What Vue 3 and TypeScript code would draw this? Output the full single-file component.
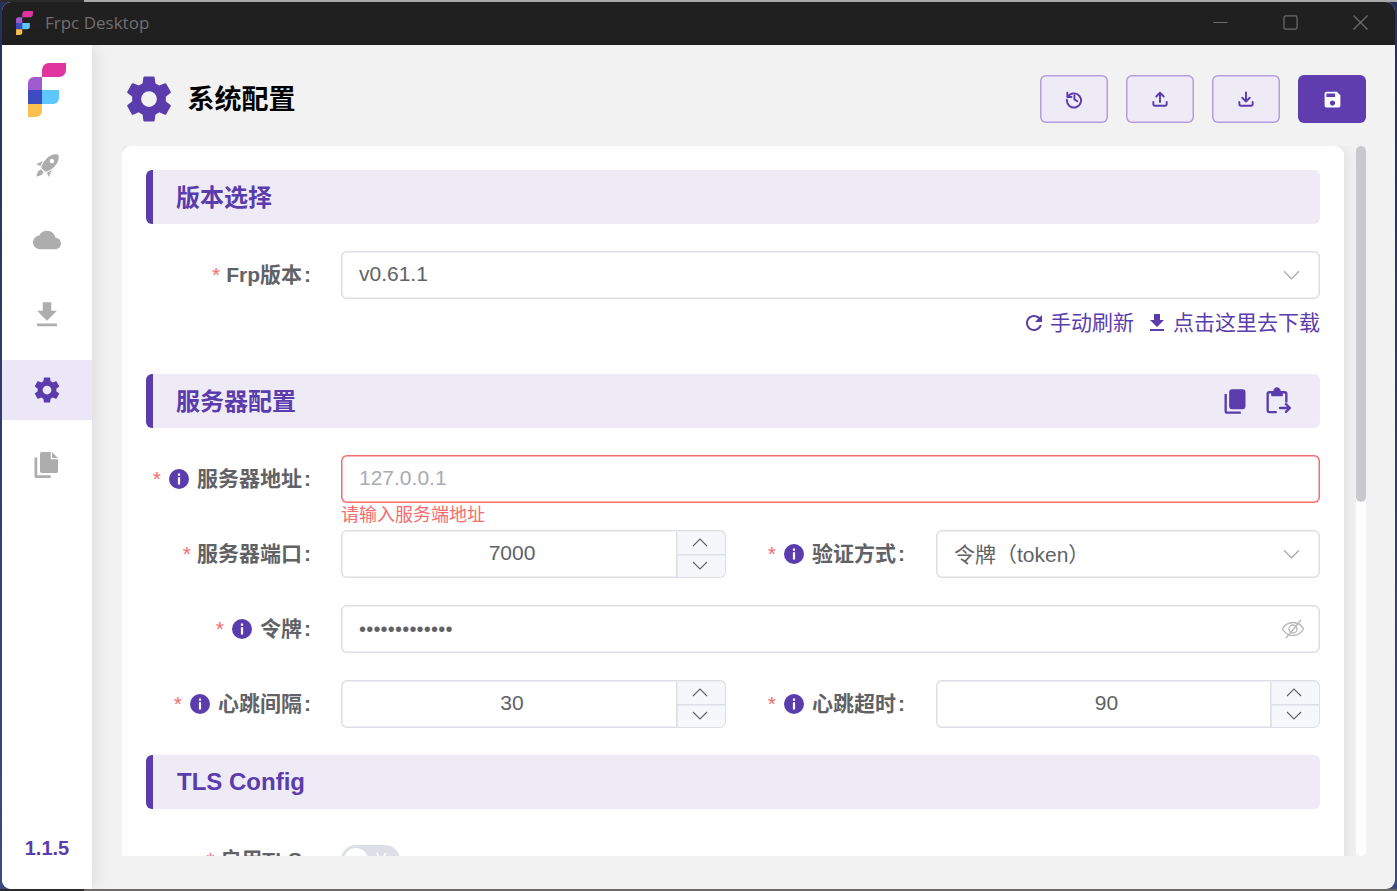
<script setup lang="ts">
interface NavItem { id: string; active?: boolean }
const nav: NavItem[] = [
  { id: 'rocket' },
  { id: 'cloud' },
  { id: 'download' },
  { id: 'gear', active: true },
  { id: 'file' },
]
const gear = 'M12,15.5A3.5,3.5 0 0,1 8.5,12A3.5,3.5 0 0,1 12,8.5A3.5,3.5 0 0,1 15.5,12A3.5,3.5 0 0,1 12,15.5M19.43,12.97C19.47,12.65 19.5,12.33 19.5,12C19.5,11.67 19.47,11.34 19.43,11L21.54,9.37C21.73,9.22 21.78,8.95 21.66,8.73L19.66,5.27C19.54,5.05 19.27,4.96 19.05,5.05L16.56,6.05C16.04,5.66 15.5,5.32 14.87,5.07L14.5,2.42C14.46,2.18 14.25,2 14,2H10C9.75,2 9.54,2.18 9.5,2.42L9.13,5.07C8.5,5.32 7.96,5.66 7.44,6.05L4.95,5.05C4.73,4.96 4.46,5.05 4.34,5.27L2.34,8.73C2.21,8.95 2.27,9.22 2.46,9.37L4.57,11C4.53,11.34 4.5,11.67 4.5,12C4.5,12.33 4.53,12.65 4.57,12.97L2.46,14.63C2.27,14.78 2.21,15.05 2.34,15.27L4.34,18.73C4.46,18.95 4.73,19.03 4.95,18.95L7.44,17.94C7.96,18.34 8.5,18.68 9.13,18.93L9.5,21.58C9.54,21.82 9.75,22 10,22H14C14.25,22 14.46,21.82 14.5,21.58L14.87,18.93C15.5,18.67 16.04,18.34 16.56,17.94L19.05,18.95C19.27,19.03 19.54,18.95 19.66,18.73L21.66,15.27C21.78,15.05 21.73,14.78 21.54,14.63L19.43,12.97Z'
const dl = 'M19 9h-4V3H9v6H5l7 7 7-7zM5 18v2h14v-2H5z'
const paths: Record<string, string> = {
  gear,
  download: dl,
  cloud: 'M19.35 10.04C18.67 6.59 15.64 4 12 4 9.11 4 6.6 5.64 5.35 8.04 2.34 8.36 0 10.91 0 14c0 3.31 2.69 6 6 6h13c2.76 0 5-2.24 5-5 0-2.64-2.05-4.78-4.65-4.96z',
  rocket: 'M13.13 22.19L11.5 18.36C13.07 17.78 14.54 17 15.9 16.09L13.13 22.19M5.64 12.5L1.81 10.87L7.91 8.1C7 9.46 6.22 10.93 5.64 12.5M21.61 2.39C21.61 2.39 16.66 .269 11 5.93C8.81 8.12 7.5 10.53 6.65 12.64C6.37 13.39 6.56 14.21 7.11 14.77L9.24 16.89C9.79 17.45 10.61 17.63 11.36 17.35C13.5 16.53 15.88 15.19 18.07 13C23.73 7.34 21.61 2.39 21.61 2.39M14.54 9.46C13.76 8.68 13.76 7.41 14.54 6.63S16.59 5.85 17.37 6.63C18.14 7.41 18.15 8.68 17.37 9.46C16.59 10.24 15.32 10.24 14.54 9.46M6.2 15.6C4 16 2.6 18.6 2.2 21.8C5.4 21.4 8 20 8.4 17.8Z',
  file: 'M7.800 1.600H15v5.800h5.800V17a1.400 1.400 0 0 1-1.400 1.400H7.800A1.400 1.400 0 0 1 6.400 17V3a1.400 1.400 0 0 1 1.400-1.400zM16 1.600l4.800 4.800H16zM2 6h2.200v14.200H15v2.200H3.500A1.500 1.500 0 0 1 2 20.900z',
  refresh: 'M17.65 6.35C16.2 4.9 14.21 4 12 4c-4.42 0-7.99 3.58-7.99 8s3.57 8 7.99 8c3.73 0 6.84-2.55 7.73-6h-2.08c-.82 2.33-3.04 4-5.65 4-3.31 0-6-2.69-6-6s2.69-6 6-6c1.66 0 3.14.69 4.22 1.78L13 11h7V4l-2.35 2.35z',
  save: 'M17 3H5a2 2 0 0 0-2 2v14a2 2 0 0 0 2 2h14a2 2 0 0 0 2-2V7l-4-4zm-5 16c-1.66 0-3-1.34-3-3s1.34-3 3-3 3 1.34 3 3-1.34 3-3 3zm3-10H5V5h10v4z',
  copy: 'M9.5 2h9A2.5 2.5 0 0 1 21 4.5v12a2.5 2.5 0 0 1-2.5 2.5h-9A2.5 2.5 0 0 1 7 16.500v-12A2.500 2.500 0 0 1 9.500 2zM3 6h2v14.500A.500.500 0 0 0 5.500 21H17v2H5.500A2.500 2.500 0 0 1 3 20.500z',
}
</script>

<template>
  <div class="desktop">
    <div class="window">
      <header class="titlebar">
        <div class="app-title">
          <svg class="logo-small" viewBox="0 0 38 54"><path fill="#e0359f" d="M14 7a7 7 0 0 1 7-7h17v7a7 7 0 0 1-7 7H14z"/><path fill="#a05bd0" d="M0 20a6 6 0 0 1 6-6h8v13H0z"/><path fill="#3f4bc0" d="M0 27h14v14H0z"/><path fill="#5cc8ff" d="M14 27h17v8a6 6 0 0 1-6 6H14z"/><path fill="#fdc04e" d="M0 41h14v7a6 6 0 0 1-6 6H0z"/></svg>
          <span>Frpc Desktop</span>
        </div>
        <div class="controls">
          <svg viewBox="0 0 16 16"><path d="M.5 8h15" /></svg>
          <svg viewBox="0 0 16 16"><rect x="1" y="1" width="14" height="14" rx="2" /></svg>
          <svg viewBox="0 0 16 16"><path d="M.5.500l15 15M15.500.500l-15 15" /></svg>
        </div>
      </header>

      <div class="body">
        <aside class="sidebar">
          <svg class="logo" viewBox="0 0 38 54"><path fill="#e0359f" d="M14 7a7 7 0 0 1 7-7h17v7a7 7 0 0 1-7 7H14z"/><path fill="#a05bd0" d="M0 20a6 6 0 0 1 6-6h8v13H0z"/><path fill="#3f4bc0" d="M0 27h14v14H0z"/><path fill="#5cc8ff" d="M14 27h17v8a6 6 0 0 1-6 6H14z"/><path fill="#fdc04e" d="M0 41h14v7a6 6 0 0 1-6 6H0z"/></svg>
          <nav class="nav">
            <div v-for="n in nav" :key="n.id" class="nav-item" :class="{ active: n.active }">
              <svg viewBox="0 0 24 24" :class="'nav-' + n.id"><path :d="paths[n.id]" /></svg>
            </div>
          </nav>
          <div class="version">1.1.5</div>
        </aside>

        <main class="main">
          <div class="page-head">
            <svg class="head-icon" viewBox="0 0 24 24"><path :d="gear" /></svg>
            <h1>系统配置</h1>
            <div class="actions">
              <button class="btn">
                <svg viewBox="0 0 24 24" class="stroke"><path d="M4 4.500v5h5" /><path d="M4.600 9.500A8.500 8.500 0 1 1 3.500 13" /><path d="M12.500 7.500v5l3.500 2.200" /></svg>
              </button>
              <button class="btn">
                <svg viewBox="0 0 24 24" class="stroke"><path d="M12 15.500V5M7.500 9 12 4.500 16.500 9" /><path d="M4 15.500V18a2 2 0 0 0 2 2h12a2 2 0 0 0 2-2v-2.500" /></svg>
              </button>
              <button class="btn">
                <svg viewBox="0 0 24 24" class="stroke"><path d="M12 4v11M7.500 10.500 12 15l4.500-4.500" /><path d="M4 15.500V18a2 2 0 0 0 2 2h12a2 2 0 0 0 2-2v-2.500" /></svg>
              </button>
              <button class="btn primary">
                <svg viewBox="0 0 24 24"><path :d="paths.save" /></svg>
              </button>
            </div>
          </div>

          <div class="scroll-area">
            <div class="scroller">
              <section class="card">
                <div class="sec-head"><span class="sec-title">版本选择</span></div>
                <div class="row tight">
                  <label class="label"><i class="star">*</i><span class="txt">Frp版本<b>:</b></span></label>
                  <div class="control">
                    <span class="val">v0.61.1</span>
                    <svg class="chev" viewBox="0 0 18 10"><path d="M1 1l8 8 8-8" /></svg>
                  </div>
                </div>
                <div class="links">
                  <a><svg viewBox="0 0 24 24"><path :d="paths.refresh" /></svg><span>手动刷新</span></a>
                  <a><svg viewBox="0 0 24 24"><path :d="dl" /></svg><span>点击这里去下载</span></a>
                </div>

                <div class="sec-head">
                  <span class="sec-title">服务器配置</span>
                  <div class="sec-tools">
                    <svg viewBox="0 0 24 24"><path :d="paths.copy" /></svg>
                    <svg viewBox="0 0 24 24" class="stroke clip"><path d="M8 4.500H5.500A1.500 1.500 0 0 0 4 6v14a1.500 1.500 0 0 0 1.500 1.500H11" /><path d="M16 4.500h2.500A1.500 1.500 0 0 1 20 6v6.500" /><path d="M8 4.500h2.400a2 2 0 1 1 3.200 0H16v2.500H8z" class="clip-fill" /><path d="M14.500 18h8.500M19.700 14.700 23 18l-3.300 3.300" /></svg>
                  </div>
                </div>
                <div class="row">
                  <label class="label"><i class="star">*</i><svg class="info" viewBox="0 0 20 20"><circle cx="10" cy="10" r="10" /><path d="M8.900 4.500h2.200v2.200H8.900zM8.900 8.300h2.200v7.200H8.900z" fill="#fff" /></svg><span class="txt">服务器地址<b>:</b></span></label>
                  <div class="control error">
                    <span class="val placeholder">127.0.0.1</span>
                    <div class="err-msg">请输入服务端地址</div>
                  </div>
                </div>
                <div class="row two">
                  <div class="col">
                    <label class="label"><i class="star">*</i><span class="txt">服务器端口<b>:</b></span></label>
                    <div class="control number">
                      <span class="val num">7000</span>
                      <div class="stepper">
                        <div><svg viewBox="0 0 16 9"><path d="M1 8l7-7 7 7" /></svg></div>
                        <div><svg viewBox="0 0 16 9"><path d="M1 1l7 7 7-7" /></svg></div>
                      </div>
                    </div>
                  </div>
                  <div class="col">
                    <label class="label"><i class="star">*</i><svg class="info" viewBox="0 0 20 20"><circle cx="10" cy="10" r="10" /><path d="M8.900 4.500h2.200v2.200H8.900zM8.900 8.300h2.200v7.200H8.900z" fill="#fff" /></svg><span class="txt">验证方式<b>:</b></span></label>
                    <div class="control">
                      <span class="val">令牌（token）</span>
                      <svg class="chev" viewBox="0 0 18 10"><path d="M1 1l8 8 8-8" /></svg>
                    </div>
                  </div>
                </div>
                <div class="row">
                  <label class="label"><i class="star">*</i><svg class="info" viewBox="0 0 20 20"><circle cx="10" cy="10" r="10" /><path d="M8.900 4.500h2.200v2.200H8.900zM8.900 8.300h2.200v7.200H8.900z" fill="#fff" /></svg><span class="txt">令牌<b>:</b></span></label>
                  <div class="control">
                    <span class="dots">•••••••••••••</span>
                    <svg class="eye" viewBox="0 0 24 24"><path d="M1.500 12C4 7.500 7.700 5.500 12 5.500s8 2 10.500 6.500C20 16.500 16.300 18.500 12 18.500S4 16.500 1.500 12z" /><circle cx="12" cy="12" r="4" /><path d="M5 21 20 3" /></svg>
                  </div>
                </div>
                <div class="row two">
                  <div class="col">
                    <label class="label"><i class="star">*</i><svg class="info" viewBox="0 0 20 20"><circle cx="10" cy="10" r="10" /><path d="M8.900 4.500h2.200v2.200H8.900zM8.900 8.300h2.200v7.200H8.900z" fill="#fff" /></svg><span class="txt">心跳间隔<b>:</b></span></label>
                    <div class="control number">
                      <span class="val num">30</span>
                      <div class="stepper">
                        <div><svg viewBox="0 0 16 9"><path d="M1 8l7-7 7 7" /></svg></div>
                        <div><svg viewBox="0 0 16 9"><path d="M1 1l7 7 7-7" /></svg></div>
                      </div>
                    </div>
                  </div>
                  <div class="col">
                    <label class="label"><i class="star">*</i><svg class="info" viewBox="0 0 20 20"><circle cx="10" cy="10" r="10" /><path d="M8.900 4.500h2.200v2.200H8.900zM8.900 8.300h2.200v7.200H8.900z" fill="#fff" /></svg><span class="txt">心跳超时<b>:</b></span></label>
                    <div class="control number">
                      <span class="val num">90</span>
                      <div class="stepper">
                        <div><svg viewBox="0 0 16 9"><path d="M1 8l7-7 7 7" /></svg></div>
                        <div><svg viewBox="0 0 16 9"><path d="M1 1l7 7 7-7" /></svg></div>
                      </div>
                    </div>
                  </div>
                </div>

                <div class="sec-head"><span class="sec-title latin">TLS Config</span></div>
                <div class="row">
                  <label class="label"><i class="star">*</i><span class="txt">启用TLS<b>:</b></span></label>
                  <div class="switch-wrap">
                    <div class="switch"><i class="knob"></i><span>关</span></div>
                  </div>
                </div>
              </section>
            </div>
            <div class="scroll-track"><div class="scroll-thumb"></div></div>
          </div>
        </main>
      </div>
    </div>
  </div>
</template>

<style>
html, body { margin: 0; padding: 0; overflow: hidden; }
</style>

<style scoped>
* { box-sizing: border-box; }
.desktop {
  width: 1397px;
  height: 891px;
  padding: 2px;
  font-family: "Liberation Sans", "Noto Sans CJK SC", sans-serif;
  background:
    linear-gradient(90deg, #2b2b2b 0 84px, #a9a9a9 84px 100%) top / 100% 2px no-repeat,
    linear-gradient(90deg, #2b2b2b 0 84px, #6d6a66 84px 100%) bottom / 100% 2px no-repeat,
    linear-gradient(180deg, #27305a, #3b4a80);
}
.window {
  width: 1393px;
  height: 887px;
  border-radius: 9px;
  overflow: hidden;
  display: flex;
  flex-direction: column;
  background: #f2f2f2;
}
.titlebar {
  height: 43px;
  flex: none;
  background: #202020;
  display: flex;
  align-items: center;
  justify-content: space-between;
  padding: 0 27px 2px 14px;
}
.app-title {
  display: flex;
  align-items: center;
  gap: 12px;
  color: #6f6f6f;
  font: 17px "Open Sans", sans-serif;
}
.logo-small { width: 17px; height: 24px; }
.controls { display: flex; gap: 55px; align-items: center; }
.controls svg { width: 15px; height: 15px; fill: none; stroke: #6c6c6c; stroke-width: 1.3; }
.body { flex: 1; display: flex; min-height: 0; }
.sidebar {
  width: 90px;
  flex: none;
  background: #fff;
  box-shadow: 0 0 20px rgba(0, 0, 0, .12);
  position: relative;
  z-index: 1;
  display: flex;
  flex-direction: column;
  align-items: center;
  padding-top: 18px;
}
.logo { width: 38px; height: 54px; flex: none; margin-bottom: 18px; }
.nav { width: 100%; display: flex; flex-direction: column; gap: 15px; flex: 1; }
.nav-item { height: 60px; display: flex; align-items: center; justify-content: center; }
.nav-item svg { width: 30px; height: 30px; fill: #adadad; }
.nav-item .nav-download { width: 34px; height: 34px; }
.nav-item .nav-cloud { width: 28px; height: 28px; }
.nav-item .nav-rocket { width: 27px; height: 27px; }
.nav-item.active { background: #ebe7f6; }
.nav-item.active svg { fill: #5a3cac; }
.version { color: #5a3cac; font-weight: 700; font-size: 20px; line-height: 24px; margin-bottom: 29px; }
.main {
  flex: 1;
  min-width: 0;
  padding: 30px 29px 33px 30px;
  display: flex;
  flex-direction: column;
}
.page-head { height: 48px; flex: none; display: flex; align-items: center; margin-bottom: 23px; }
.head-icon { width: 54px; height: 54px; fill: #5a3cac; margin-right: 11.5px; }
.page-head h1 { margin: 0 0 4px; font-size: 27px; font-weight: 700; color: #000; }
.actions { margin-left: auto; display: flex; gap: 18px; }
.btn {
  width: 68px;
  height: 48px;
  border: 0;
  box-shadow: inset 0 0 0 1.5px #b39ee0;
  border-radius: 6px;
  background: #eeeaf6;
  padding: 0;
  display: flex;
  align-items: center;
  justify-content: center;
}
.btn svg { width: 20px; height: 20px; }
.stroke { fill: none; stroke: #5a3cac; stroke-width: 2.3; stroke-linecap: round; stroke-linejoin: round; }
.btn.primary { background: #5f3dae; box-shadow: none; }
.btn.primary svg { fill: #fff; width: 21px; height: 21px; }
.scroll-area { flex: 1; min-height: 0; display: flex; }
.scroller { width: 1234px; flex: none; height: 100%; overflow: hidden; }
.scroll-track { width: 10px; height: 100%; flex: none; background: #fff; border-radius: 5px; }
.scroll-thumb { height: 356px; background: #c8c9cc; border-radius: 5px; }
.card {
  width: 1222px;
  min-height: 1416px;
  background: #fff;
  border-radius: 9px;
  padding: 24px;
  box-shadow: 0 0 18px rgba(0, 0, 0, .1);
}
.sec-head {
  height: 54px;
  background: #eeeaf6;
  border-left: 7px solid #5a3cac;
  border-radius: 6px;
  display: flex;
  align-items: center;
  justify-content: space-between;
  padding: 0 29px 0 23px;
  margin-bottom: 27px;
  color: #5a3cac;
  font-size: 24px;
  font-weight: 700;
}
.sec-title { margin-bottom: 4px; }
.latin { margin-left: 1px; margin-bottom: 0; }
.sec-tools { display: flex; gap: 14px; align-items: center; }
.sec-tools svg { width: 28px; height: 28px; fill: #5a3cac; }
.sec-tools svg.clip { fill: none; stroke-width: 2; }
.clip-fill { fill: #5a3cac; }
.row { display: flex; margin-bottom: 27px; }
.row.tight { margin-bottom: 0; }
.row.two { display: grid; grid-template-columns: 580px 579px; gap: 15px; }
.col { display: flex; min-width: 0; }
.label {
  width: 195px;
  flex: none;
  display: flex;
  align-items: center;
  justify-content: flex-end;
  padding-right: 30px;
  color: #606266;
  font-size: 21px;
  font-weight: 700;
  height: 48px;
}
.col + .col .label { padding-right: 31px; }
.txt { margin-bottom: 4px; }
.label b { font-weight: 700; margin-left: 2px; }
.star { color: #f56c6c; font-style: normal; font-weight: 400; margin-right: 6px; }
.info { width: 20px; height: 20px; fill: #5a3cac; flex: none; margin: 0 8px 0 2px; }
.control {
  position: relative;
  flex: 1;
  min-width: 0;
  height: 48px;
  box-shadow: inset 0 0 0 1.5px #dcdfe6;
  border-radius: 6px;
  display: flex;
  align-items: center;
  padding: 0 20px 0 18px;
  color: #606266;
  font-size: 21px;
  background: #fff;
}
.val { margin-bottom: 2px; }
.control.error { box-shadow: inset 0 0 0 1.5px #f56c6c; }
.placeholder { color: #a8abb2; }
.err-msg {
  position: absolute;
  left: 0;
  top: 100%;
  color: #f56c6c;
  font-size: 18px;
  line-height: 24px;
}
.chev { width: 17px; height: 10px; margin-left: auto; fill: none; stroke: #a8abb2; stroke-width: 1.300; }
.eye { width: 24px; height: 24px; margin-left: auto; margin-right: -5px; fill: none; stroke: #b5b7bc; stroke-width: 1.300; }
.dots { letter-spacing: .2px; font-size: 20px; }
.control.number { padding: 0; }
.num { flex: 1; text-align: center; padding-left: 7px; }
.stepper {
  width: 48.5px;
  height: 45px;
  margin-right: 1.5px;
  flex: none;
  display: flex;
  flex-direction: column;
  box-shadow: inset 1.5px 0 0 #dcdfe6;
  background: #f5f7fa;
  border-radius: 0 5px 5px 0;
}
.stepper div { flex: 1; display: flex; align-items: center; justify-content: center; }
.stepper div + div { box-shadow: inset 1.5px 1.5px 0 #dcdfe6; }
.stepper svg { width: 16px; height: 9px; fill: none; stroke: #606266; stroke-width: 1.100; }
.links {
  height: 48px;
  margin-bottom: 27px;
  display: flex;
  justify-content: flex-end;
  align-items: center;
  gap: 11px;
  color: #5a3cac;
  font-size: 21px;
}
.links a { display: flex; align-items: center; gap: 4px; }
.links span { margin-bottom: 4px; }
.links svg { width: 24px; height: 24px; fill: #5a3cac; }
.switch-wrap { flex: 1; height: 48px; display: flex; align-items: center; }
.switch {
  width: 59px;
  height: 30px;
  border-radius: 15px;
  background: #dcdfe6;
  position: relative;
  display: flex;
  align-items: center;
  justify-content: flex-end;
  padding-right: 10px;
  color: #fff;
  font-size: 18px;
}
.knob { position: absolute; left: 3px; top: 3px; width: 24px; height: 24px; border-radius: 50%; background: #fff; }
</style>
